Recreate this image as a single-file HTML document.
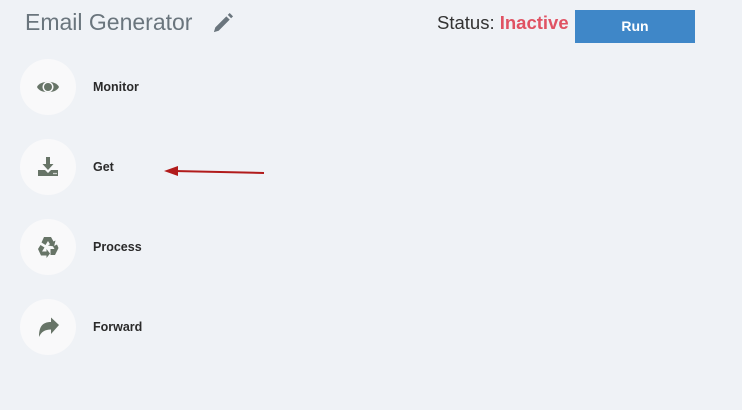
<!DOCTYPE html>
<html><head><style>
body{margin:0;width:742px;height:410px;background:#eff2f6;font-family:"Liberation Sans",sans-serif;position:relative;overflow:hidden}
.t{position:absolute;left:25px;top:9px;font-size:23px;color:#6a757d}
.st{position:absolute;left:437px;top:12px;font-size:18.5px;color:#333}
.st b{color:#e05263}
.btn{position:absolute;left:575px;top:10px;width:120px;height:33px;background:#3f87c8;color:#fff;font-size:14px;font-weight:bold;text-align:center;line-height:33px}
.c{position:absolute;left:20px;width:56px;height:56px;border-radius:50%;background:#f9f9fa}
.c svg{position:absolute;left:16px;top:16px}
.l{position:absolute;left:93px;font-size:12.5px;font-weight:bold;color:#2a2a2a;top:0}
</style></head><body>
<div class="t">Email Generator</div>
<svg style="position:absolute;left:211px;top:12px" width="23" height="23" viewBox="0 0 24 24"><path d="M3 21l1.5-5L16 4.5l3.5 3.5L8 19.5z M17.5 3l2-2 3.5 3.5-2 2z" fill="#6a757d"/></svg>
<div class="st">Status: <b>Inactive</b></div>
<div class="btn">Run</div>

<div class="c" style="top:59px"><svg width="24" height="24" viewBox="0 0 24 24"><path d="M1 12C4 5 20 5 23 12C20 19 4 19 1 12z" fill="#677467"/><circle cx="12" cy="12" r="5.5" fill="#f9f9fa"/><circle cx="12" cy="12" r="4" fill="#677467"/></svg></div>
<div class="l" style="top:80px">Monitor</div>

<div class="c" style="top:139px"><svg width="24" height="24" viewBox="0 0 24 24"><path d="M10 2h4v7h3.5L12 15 6.5 9H10z" fill="#677467"/><path d="M2 15h7l3 3 3-3h7v6H2z" fill="#677467"/><circle cx="18" cy="18.5" r="0.8" fill="#f9f9fa"/><circle cx="20" cy="18.5" r="0.8" fill="#f9f9fa"/></svg></div>
<div class="l" style="top:160px">Get</div>
<svg style="position:absolute;left:160px;top:163px" width="108" height="16"><line x1="14" y1="8" x2="104" y2="10" stroke="#b11b1b" stroke-width="2"/><path d="M4 8L18 3L18 13z" fill="#b11b1b"/></svg>

<div class="c" style="top:219px"><svg width="24" height="24" viewBox="0 0 24 24"><path d="M8 2h7l2.5 4.5 2-1-1.5 6-6-1 2-1.2-2-3.3-2.5 4-4-2.5z M2 14l2.5-4 4 2.5-2.5 4h4.5v-2.5l3.5 4.5-3.5 4.5v-2.5H5z M22.5 13l-3.5 7h-4.5v-6l4 0-1.5-2.5 4-2z" fill="#677467"/></svg></div>
<div class="l" style="top:240px">Process</div>

<div class="c" style="top:299px"><svg width="24" height="24" viewBox="0 0 24 24"><path d="M23 10l-8-7.5v4.5C6 7 3 12 3 22c2-5 6-7.5 12-7.5v4.5z" fill="#677467"/></svg></div>
<div class="l" style="top:320px">Forward</div>
</body></html>
